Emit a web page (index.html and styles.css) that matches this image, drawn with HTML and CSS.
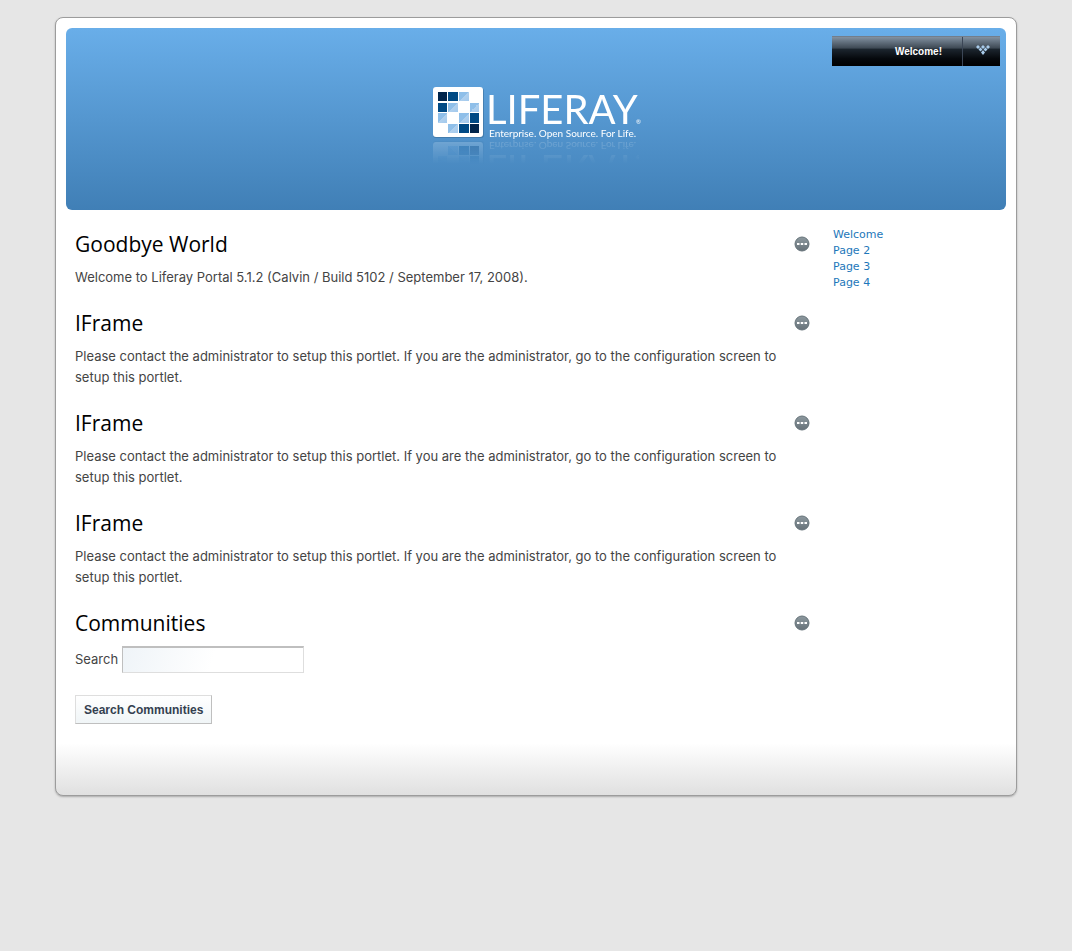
FILE: index.html
```html
<!DOCTYPE html>
<html lang="en">
<head>
<meta charset="utf-8">
<title>Welcome - Liferay Portal</title>
<link rel="stylesheet" href="styles.css">
</head>
<body>
<svg class="defs" aria-hidden="true">
  <defs>
    <linearGradient id="dots-bg" x1="0" y1="0" x2="0" y2="1">
      <stop offset="0" stop-color="#8d999f"/>
      <stop offset="1" stop-color="#667178"/>
    </linearGradient>
    <symbol id="dots" viewBox="0 0 16 16">
      <circle cx="8" cy="8" r="7" fill="url(#dots-bg)" stroke="#66737a"/>
      <path d="M3 7h2.500v2H3zM6.750 7h2.500v2h-2.500zM10.500 7H13v2h-2.500z" fill="#fff"/>
    </symbol>
  </defs>
</svg>
<div class="wrapper">
  <header class="banner">
    <a class="logo" href="#" aria-label="Liferay home">
      <svg width="206" height="53" viewBox="0 0 206 53">
        <defs>
          <linearGradient id="pale" x1="0" y1="0" x2="1" y2="1">
            <stop offset=".5" stop-color="#8fbfe9"/>
            <stop offset=".5" stop-color="#b0d0ee"/>
            <stop offset="1" stop-color="#a2c9ed"/>
          </linearGradient>
        </defs>
        <rect x="0" y="2" width="51" height="50" rx="3" fill="#33658f" opacity=".5"/>
        <rect x="0" y="1" width="50" height="50" rx="3" fill="#fff"/>
        <g fill="#00254c"><rect x="5" y="6" width="9" height="9"/><rect x="37" y="38" width="9" height="9"/></g>
        <g fill="#004a85"><rect x="15" y="6" width="10" height="9"/><rect x="5" y="17" width="9" height="9"/><rect x="37" y="27" width="9" height="10"/><rect x="26" y="38" width="10" height="9"/></g>
        <g fill="url(#pale)"><rect x="26" y="6" width="10" height="9"/><rect x="15" y="17" width="10" height="9"/><rect x="37" y="17" width="9" height="9"/><rect x="5" y="27" width="9" height="10"/><rect x="26" y="27" width="10" height="10"/><rect x="15" y="38" width="10" height="9"/></g>
        <text class="logo-name" x="53" y="38">LIFERAY</text>
        <text class="logo-mark" x="203" y="38">®</text>
        <text class="logo-tag" x="56" y="51">Enterprise. Open Source. For Life.</text>
      </svg>
    </a>
    <div class="dock">
      <button class="dock-title" type="button">Welcome!</button>
      <button class="dock-toggle" type="button" aria-label="Open menu">
        <svg width="14" height="10" viewBox="0 0 14 10" fill="#a9cbea">
          <path d="M2 0l2 2-2 2-2-2zM7 0l2 2-2 2-2-2zM12 0l2 2-2 2-2-2zM4.500 2.500l2 2-2 2-2-2zM9.500 2.500l2 2-2 2-2-2zM7 5l2 2.500L7 10 5 7.500z"/>
        </svg>
      </button>
    </div>
  </header>
  <div class="columns">
    <main class="content">
      <section class="portlet">
        <div class="portlet-head"><h2>Goodbye World</h2><button class="options" type="button" aria-label="Options"><svg><use href="#dots"/></svg></button></div>
        <p>Welcome to Liferay Portal 5.1.2 (Calvin / Build 5102 / September 17, 2008).</p>
      </section>
      <section class="portlet">
        <div class="portlet-head"><h2>IFrame</h2><button class="options" type="button" aria-label="Options"><svg><use href="#dots"/></svg></button></div>
        <p>Please contact the administrator to setup this portlet. If you are the administrator, go to the configuration screen to setup this portlet.</p>
      </section>
      <section class="portlet">
        <div class="portlet-head"><h2>IFrame</h2><button class="options" type="button" aria-label="Options"><svg><use href="#dots"/></svg></button></div>
        <p>Please contact the administrator to setup this portlet. If you are the administrator, go to the configuration screen to setup this portlet.</p>
      </section>
      <section class="portlet">
        <div class="portlet-head"><h2>IFrame</h2><button class="options" type="button" aria-label="Options"><svg><use href="#dots"/></svg></button></div>
        <p>Please contact the administrator to setup this portlet. If you are the administrator, go to the configuration screen to setup this portlet.</p>
      </section>
      <section class="portlet">
        <div class="portlet-head"><h2>Communities</h2><button class="options" type="button" aria-label="Options"><svg><use href="#dots"/></svg></button></div>
        <form class="search">
          <div class="field"><label for="keywords">Search</label><input id="keywords" type="text"></div>
          <button class="submit" type="submit">Search Communities</button>
        </form>
      </section>
    </main>
    <nav class="pages">
      <a href="#">Welcome</a>
      <a href="#">Page 2</a>
      <a href="#">Page 3</a>
      <a href="#">Page 4</a>
    </nav>
  </div>
</div>
</body>
</html>
```

FILE: styles.css
```css
* {
  box-sizing: border-box;
}

body {
  margin: 0;
  padding: 17px 55px;
  background: #e6e6e6;
  color: #444;
  font: 13px/21px Inter, sans-serif;
}

.defs {
  position: absolute;
  width: 0;
  height: 0;
}

.wrapper {
  padding: 10px 10px 71px;
  border: 1px solid #9c9c9c;
  border-radius: 8px;
  background: linear-gradient(to top, #e0e0e0, #fff 52px) #fff;
  box-shadow: 0 1px 2px #aaa;
}

.banner {
  display: flex;
  justify-content: center;
  position: relative;
  height: 182px;
  padding-top: 58px;
  border-radius: 6px;
  background: linear-gradient(#69aee9, #407fb6);
}

.logo {
  height: 53px;
}

.logo svg {
  display: block;
  overflow: visible;
  -webkit-box-reflect: below 1px linear-gradient(transparent 55%, rgba(0, 0, 0, .2));
}

.logo text {
  fill: #fff;
}

.logo-name {
  font: 40px Lato, sans-serif;
}

.logo-mark {
  font: 6px Lato, sans-serif;
}

.logo-tag {
  font: 10px Lato, sans-serif;
}

.dock {
  display: flex;
  position: absolute;
  top: 8px;
  right: 6px;
  height: 30px;
  border-top: 1px solid #737e8b;
  background: linear-gradient(#8291a1, #3e4954 38%, #1c252e 42%, #05080c 75%, #000);
}

.dock button {
  border: 0;
  background: none;
  color: #fff;
  font: bold 10px "Liberation Sans", Arial, sans-serif;
}

.dock .dock-title {
  width: 130px;
  padding: 0 20px 0 0;
  text-align: right;
}

.dock .dock-toggle {
  width: 38px;
  padding: 0 0 2px 2px;
  border-left: 1px solid #3b4656;
}

.columns {
  display: grid;
  grid-template-columns: 735px 1fr;
  column-gap: 23px;
  padding: 17px 9px 0;
}

.portlet + .portlet {
  margin-top: 18px;
}

.portlet-head {
  display: flex;
  align-items: center;
  justify-content: space-between;
  height: 34px;
  margin-bottom: 6px;
}

h2 {
  margin: 0;
  color: #000;
  font: 21px/34px "Open Sans", sans-serif;
}

.options {
  width: 16px;
  height: 16px;
  padding: 0;
  border: 0;
  background: none;
}

.options svg {
  display: block;
  width: 16px;
  height: 16px;
}

p {
  margin: 0;
}

.field {
  display: flex;
  align-items: center;
  gap: 4px;
}

.field input {
  width: 182px;
  height: 27px;
  padding: 4px;
  border: 1px solid #dedede;
  border-top: 2px solid #bfbfbf;
  border-left-color: #bfbfbf;
  background: linear-gradient(105deg, #eff4f8, #fff 50%);
  font: inherit;
}

.submit {
  height: 29px;
  margin-top: 22px;
  padding: 0 8px;
  border: 1px solid #dedede;
  border-right-color: #bfbfbf;
  border-bottom-color: #bfbfbf;
  background: linear-gradient(#fff, #f0f5f7);
  color: #34404f;
  font: bold 12px "Liberation Sans", Arial, sans-serif;
}

.pages {
  display: flex;
  flex-direction: column;
  font: 11px/16px Verdana, "DejaVu Sans", sans-serif;
}

.pages a {
  color: #1d77ba;
  text-decoration: none;
}
```
